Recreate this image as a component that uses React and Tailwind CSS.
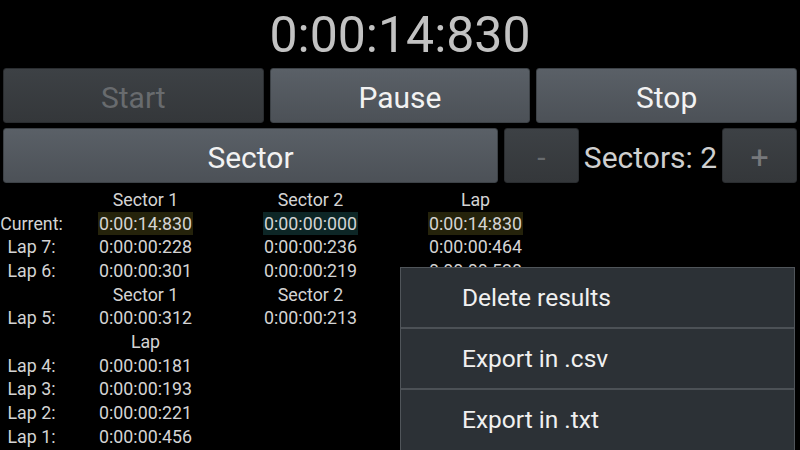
import React from 'react';

const font = { fontFamily: 'Roboto, "Noto Sans", sans-serif' };

const Btn = ({ children, disabled, className = '' }) => (
  <div
    className={`flex items-center justify-center shrink-0 pt-[3px] rounded-[3px] border ${
      disabled
        ? 'bg-gradient-to-b from-[#3d4145] to-[#34373a] border-[#2a2d30] text-[#686b6e]'
        : 'bg-gradient-to-b from-[#5a6067] to-[#4c5157] border-[#3d4247] text-[#f2f2f2]'
    } ${className}`}
  >
    {children}
  </div>
);

const rows = [
  { type: 'head', cols: ['Sector 1', 'Sector 2', 'Lap'] },
  { label: 'Current:', cols: ['0:00:14:830', '0:00:00:000', '0:00:14:830'], hl: ['bg-[#25230b]', 'bg-[#0d2626]', 'bg-[#25230b]'] },
  { label: 'Lap 7:', cols: ['0:00:00:228', '0:00:00:236', '0:00:00:464'] },
  { label: 'Lap 6:', cols: ['0:00:00:301', '0:00:00:219', '0:00:00:520'] },
  { type: 'head', cols: ['Sector 1', 'Sector 2', ''] },
  { label: 'Lap 5:', cols: ['0:00:00:312', '0:00:00:213', ''] },
  { type: 'head', cols: ['Lap', '', ''] },
  { label: 'Lap 4:', cols: ['0:00:00:181', '', ''] },
  { label: 'Lap 3:', cols: ['0:00:00:193', '', ''] },
  { label: 'Lap 2:', cols: ['0:00:00:221', '', ''] },
  { label: 'Lap 1:', cols: ['0:00:00:456', '', ''] },
];

export default function App() {
  return (
    <div className="relative w-[800px] h-[450px] bg-black overflow-hidden" style={font}>
      <div className="h-[68px] flex items-center justify-center text-[50px] text-[#c2c2c2] leading-none pt-[2px]">
        0:00:14:830
      </div>

      <div className="grid grid-cols-3 gap-[6px] px-[3px] h-[55px]">
        <Btn disabled className="text-[30px]">Start</Btn>
        <Btn className="text-[30px]">Pause</Btn>
        <Btn className="text-[30px]">Stop</Btn>
      </div>

      <div className="flex px-[3px] mt-[5px] h-[55px]">
        <Btn className="w-[495px] text-[30px]">Sector</Btn>
        <Btn disabled className="w-[75px] ml-[6px] text-[30px]">-</Btn>
        <div className="flex-1 min-w-0 flex items-center justify-center pt-[3px] text-[30px] text-[#cfcfcf] whitespace-nowrap">
          Sectors: 2
        </div>
        <Btn disabled className="w-[75px] text-[32px] text-[#77797c]">+</Btn>
      </div>

      <div className="mt-[5px] text-[17.8px] text-[#d4d4d4]">
        {rows.map((r, i) => (
          <div key={i} className="flex h-[23.7px] items-center leading-none">
            <div className="w-[63px] text-center whitespace-nowrap">{r.label || ''}</div>
            {r.cols.map((c, j) => (
              <div key={j} className="w-[165px] flex justify-center">
                <span className={`px-[1px] py-[3px] ${r.hl ? r.hl[j] : ''}`}>{c}</span>
              </div>
            ))}
          </div>
        ))}
      </div>

      <div className="absolute left-[400px] top-[267px] w-[395px] h-[200px] bg-[#2c3136] border border-[#50555a] text-[24.5px] text-[#f0f0f0]">
        <div className="h-[59px] flex items-center pl-[61px] pt-[2px]">Delete results</div>
        <div className="h-[2px] bg-[#4c5156]" />
        <div className="h-[59px] flex items-center pl-[61px] pt-[2px]">Export in .csv</div>
        <div className="h-[2px] bg-[#4c5156]" />
        <div className="h-[59px] flex items-center pl-[61px] pt-[2px]">Export in .txt</div>
      </div>
    </div>
  );
}
